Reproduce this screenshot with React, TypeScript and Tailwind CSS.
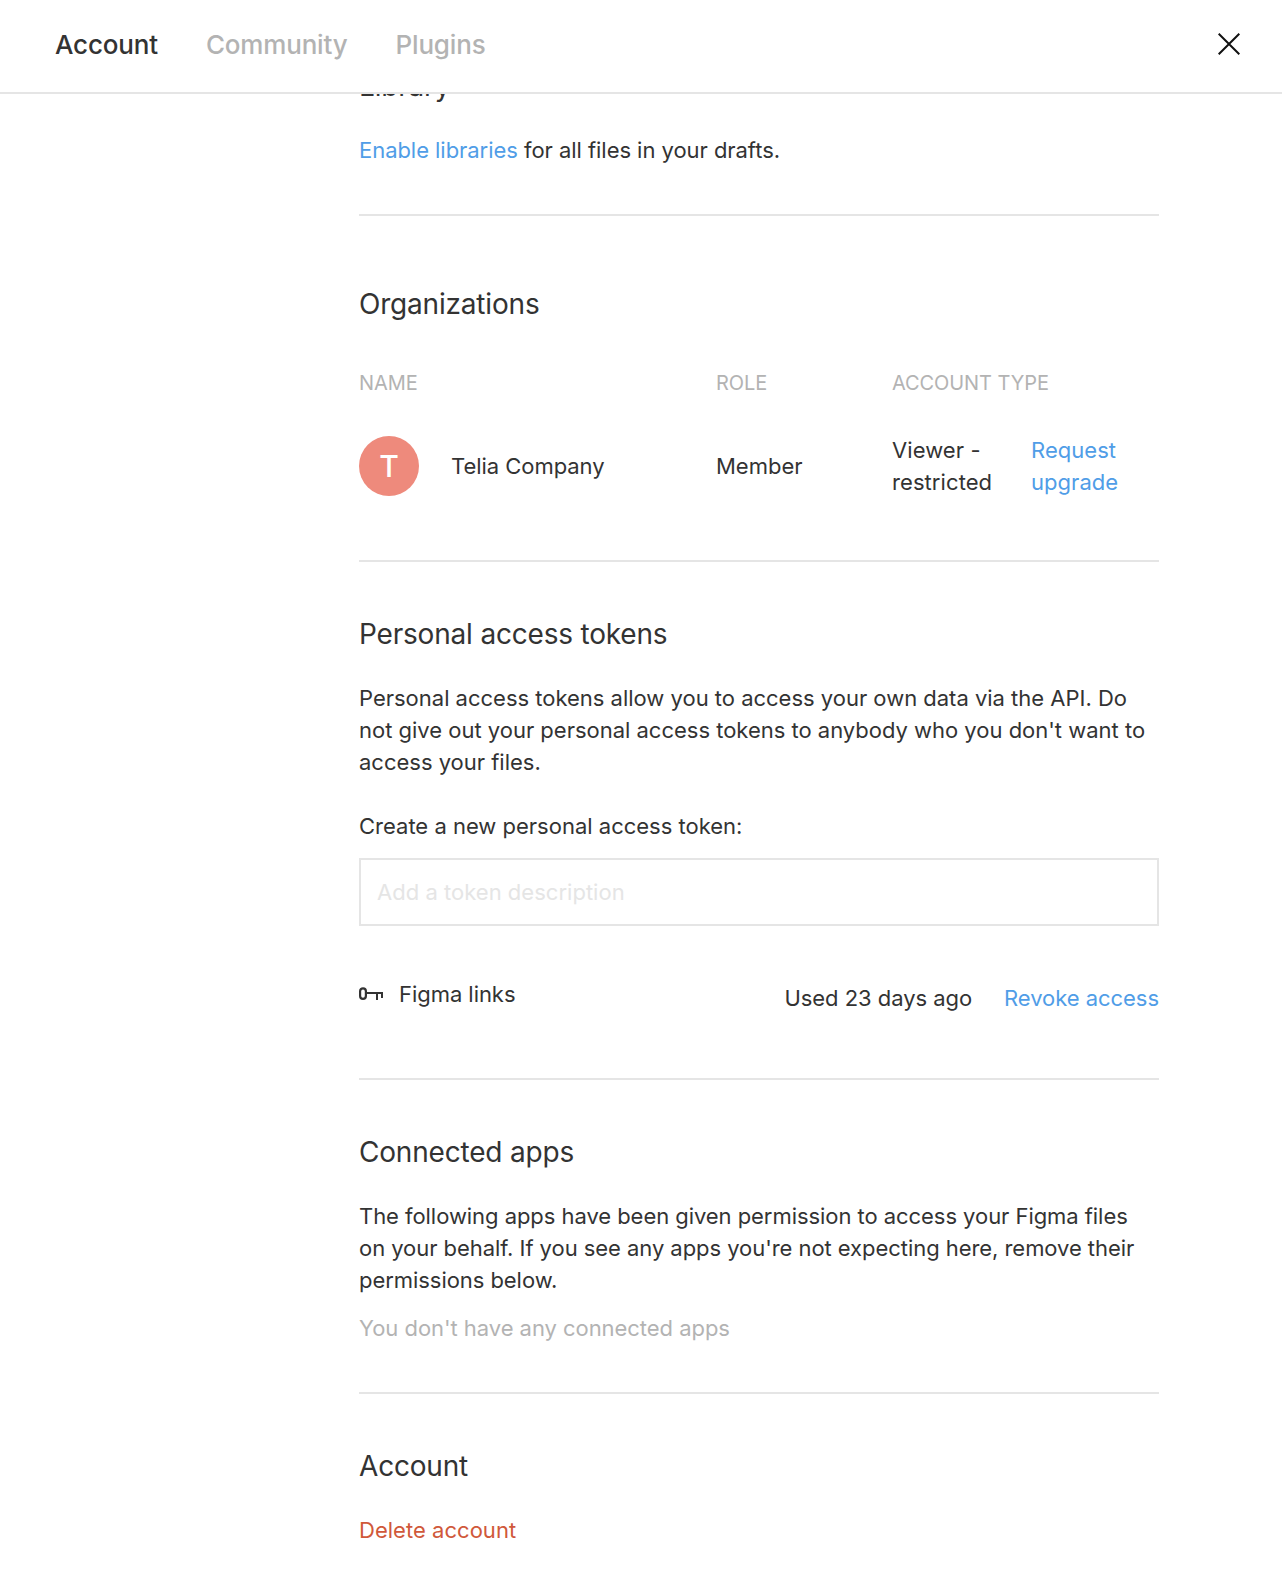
import React from "react";

const tabs = [
  { label: "Account", active: true },
  { label: "Community", active: false },
  { label: "Plugins", active: false },
];

function Heading({ children }: { children: React.ReactNode }) {
  return (
    <h2 className="text-[28px] leading-[48px] tracking-[-0.19px]">{children}</h2>
  );
}

function Link({ children }: { children: React.ReactNode }) {
  return (
    <a href="#" className="text-[#509de7]">
      {children}
    </a>
  );
}

function KeyIcon() {
  return (
    <svg width="24" height="14" viewBox="0 0 24 14" fill="none" stroke="#333333" strokeWidth="2">
      <rect x="1.1" y="1.3" width="5.8" height="10.6" rx="2.9" strokeWidth="2.2" />
      <path d="M7 6H23V11M18 6V13" />
    </svg>
  );
}

export default function App() {
  return (
    <div className="h-[1593px] overflow-hidden bg-white font-['Inter',sans-serif] text-[22px] leading-8 tracking-[-0.045px] text-[#333333] [font-optical-sizing:none]">
      <header className="relative z-10 flex h-[94px] items-start justify-between border-b-2 border-[#e5e5e5] bg-white pl-[55px] pr-[42px]">
        <nav className="flex gap-12 pt-[29px] text-[26px] font-medium tracking-[-0.17px]">
          {tabs.map((tab) => (
            <a key={tab.label} href="#" className={tab.active ? "text-[#333333]" : "text-[#b3b3b3]"}>
              {tab.label}
            </a>
          ))}
        </nav>
        <button aria-label="Close" className="mt-[33px]">
          <svg width="22" height="22" viewBox="0 0 22 22" fill="none" stroke="#111111" strokeWidth="2">
            <path d="M0.7 0.7L21.3 21.3M21.3 0.7L0.7 21.3" />
          </svg>
        </button>
      </header>

      <main className="-mt-8 ml-[359px] w-[800px]">
        <section className="border-b-2 border-[#e5e5e5] pb-12">
          <Heading>Library</Heading>
          <p className="mt-6">
            <Link>Enable libraries</Link> for all files in your drafts.
          </p>
        </section>

        <section className="border-b-2 border-[#e5e5e5] pb-[62px] pt-16">
          <Heading>Organizations</Heading>
          <div className="mt-[39px] grid grid-cols-[357px_176px_139px_128px] text-[20px] tracking-[-0.08px] text-[#b3b3b3]">
            <span>NAME</span>
            <span>ROLE</span>
            <span className="col-span-2">ACCOUNT TYPE</span>
          </div>
          <div className="mt-[35px] grid grid-cols-[357px_176px_139px_128px] items-center">
            <div className="flex items-center gap-8">
              <div className="flex size-[60px] items-center justify-center rounded-full bg-[#ee8a7c] text-[30px] font-medium text-white">
                T
              </div>
              <span>Telia Company</span>
            </div>
            <span className="tracking-normal">Member</span>
            <span className="w-[110px] tracking-[0.08px]">Viewer - restricted</span>
            <span className="w-[100px] tracking-[0.04px]">
              <Link>Request upgrade</Link>
            </span>
          </div>
        </section>

        <section className="border-b-2 border-[#e5e5e5] pb-16 pt-12">
          <Heading>Personal access tokens</Heading>
          <p className="mt-6 tracking-[-0.01px]">
            Personal access tokens allow you to access your own data via the API. Do not give out
            your personal access tokens to anybody who you don't want to access your files.
          </p>
          <label htmlFor="token" className="mt-8 block tracking-normal">
            Create a new personal access token:
          </label>
          <input
            id="token"
            placeholder="Add a token description"
            className="mt-4 block h-[68px] w-full border-2 border-[#e5e5e5] px-4 tracking-[0.02px] outline-none placeholder:text-[#e5e5e5]"
          />
          <div className="mt-[52px] flex items-start justify-between">
            <div className="flex items-center gap-4">
              <KeyIcon />
              <span>Figma links</span>
            </div>
            <div className="mt-1 flex gap-8">
              <span>Used 23 days ago</span>
              <Link>Revoke access</Link>
            </div>
          </div>
        </section>

        <section className="border-b-2 border-[#e5e5e5] pb-12 pt-12">
          <Heading>Connected apps</Heading>
          <p className="mt-6 tracking-[-0.053px]">
            The following apps have been given permission to access your Figma files on your
            behalf. If you see any apps you're not expecting here, remove their permissions below.
          </p>
          <p className="mt-4 text-[#b3b3b3]">You don't have any connected apps</p>
        </section>

        <section className="pt-12">
          <Heading>Account</Heading>
          <a href="#" className="mt-6 block tracking-[0.03px] text-[#d0583a]">
            Delete account
          </a>
        </section>
      </main>
    </div>
  );
}
